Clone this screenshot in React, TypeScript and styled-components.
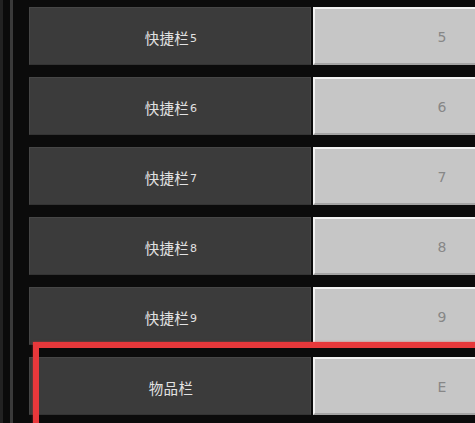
import React from "react";
import styled, { createGlobalStyle } from "styled-components";

const GlobalStyle = createGlobalStyle`
	html, body {
		margin: 0;
		padding: 0;
		background: #0b0b0b;
		overflow: hidden;
	}
	body {
		font-family: "Noto Sans CJK SC", "Noto Sans", sans-serif;
		-webkit-font-smoothing: antialiased;
	}
`;

const bindings = [
	{ label: "快捷栏", index: "5", key: "5" },
	{ label: "快捷栏", index: "6", key: "6" },
	{ label: "快捷栏", index: "7", key: "7" },
	{ label: "快捷栏", index: "8", key: "8" },
	{ label: "快捷栏", index: "9", key: "9" },
	{ label: "物品栏", index: "", key: "E", selected: true },
];

function App() {
	return (
		<>
			<GlobalStyle />
			<Page>
				<Rail />
				<List>
					{bindings.map((b) => (
						<Row key={b.label + b.index}>
							<ActionButton>
								{b.label}
								{b.index && <Index>{b.index}</Index>}
							</ActionButton>
							<KeyButton>{b.key}</KeyButton>
							{b.selected && <Highlight />}
						</Row>
					))}
				</List>
			</Page>
		</>
	);
}

export default App;

const Page = styled.div`
	display: flex;
	width: 475px;
	height: 423px;
	overflow: hidden;
	background: #0b0b0b;
`;

const Rail = styled.div`
	flex: 0 0 29px;
	box-sizing: border-box;
	border-left: 3px solid #222;

	&::after {
		content: "";
		display: block;
		margin-left: 7px;
		width: 3px;
		height: 100%;
		background: #3a3a3a;
	}
`;

const List = styled.div`
	display: flex;
	flex-direction: column;
	gap: 12px;
	padding-top: 7px;
`;

const Row = styled.div`
	position: relative;
	display: grid;
	grid-template-columns: 282px 256px;
	column-gap: 2px;
	height: 58px;
`;

const ActionButton = styled.div`
	box-sizing: border-box;
	display: flex;
	align-items: center;
	justify-content: center;
	background: #3b3b3b;
	border: 1px solid #464646;
	border-bottom-color: #333;
	color: #e2e2e2;
	font-size: 14.5px;
	letter-spacing: 0.3px;
	padding-top: 2px;
	padding-left: 2px;
`;

const Index = styled.span`
	font-family: "DejaVu Sans", sans-serif;
	font-size: 11px;
	margin-left: 1px;
	position: relative;
	top: 1px;
`;

const KeyButton = styled.div`
	box-sizing: border-box;
	display: flex;
	align-items: center;
	justify-content: center;
	background: #c6c6c6;
	border-top: 2px solid #f2f2f2;
	border-left: 2px solid #f2f2f2;
	border-bottom: 2px solid #a4a4a4;
	color: #878787;
	font-family: "DejaVu Sans", sans-serif;
	font-size: 14px;
	padding-top: 2px;
`;

const Highlight = styled.div`
	position: absolute;
	left: 4px;
	top: -15px;
	width: 600px;
	height: 200px;
	border: 6px solid #e8383b;
	box-shadow: 0 0 2px rgba(232, 56, 59, 0.6);
	pointer-events: none;
`;
